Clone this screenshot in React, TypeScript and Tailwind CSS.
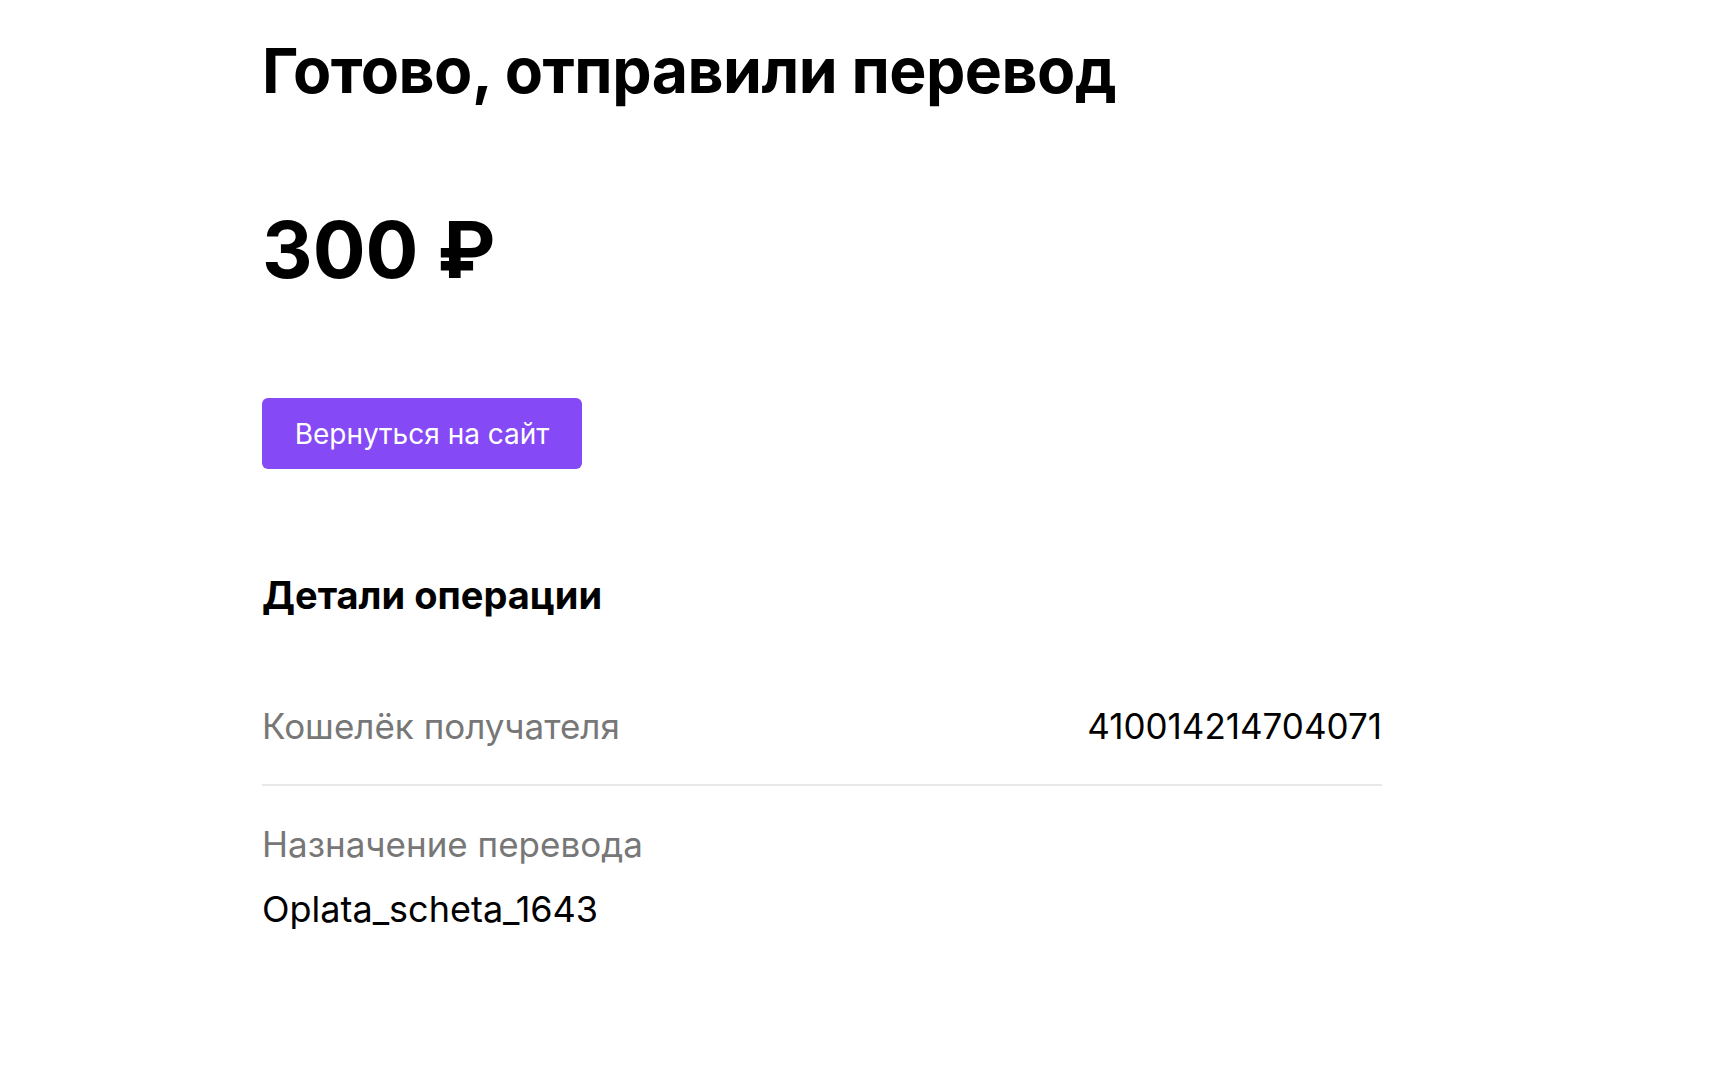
import React from 'react';

// --- Types ---
type DetailRow = {
    label: string;
    value: string;
    inline: boolean;
};

const details: DetailRow[] = [
    { label: 'Кошелёк получателя', value: '410014214704071', inline: true },
    { label: 'Назначение перевода', value: 'Oplata_scheta_1643', inline: false },
];

// --- Success page ---
export default function App() {
    return (
        <div className="min-h-screen bg-white font-['Inter','Noto_Sans',sans-serif] text-black">
            <div className="ml-[262px] w-[1120px] pt-[39px]">
                <h1 className="text-[62.5px] font-bold leading-none tracking-[-0.5px]">
                    Готово, отправили перевод
                </h1>

                <p className="mt-[109px] text-[78.5px] font-bold leading-none">300 ₽</p>

                <button className="mt-[109px] flex h-[71px] w-[320px] items-center justify-center rounded-md bg-[#8549f5] text-[28px] leading-none text-white">
                    Вернуться на сайт
                </button>

                <h2 className="mt-[107px] text-[38px] font-bold leading-none">Детали операции</h2>

                <div className="mt-[95px]">
                    {details.map((row) =>
                        row.inline ? (
                            <div
                                key={row.label}
                                className="flex items-baseline justify-between border-b-2 border-[#e8e8e8] pb-[40px] text-[35px] leading-none"
                            >
                                <span className="text-[#777777]">{row.label}</span>
                                <span>{row.value}</span>
                            </div>
                        ) : (
                            <div key={row.label} className="pt-[41px] text-[35px] leading-none">
                                <p className="text-[#777777]">{row.label}</p>
                                <p className="mt-[29px] text-[36px]">{row.value}</p>
                            </div>
                        )
                    )}
                </div>
            </div>
        </div>
    );
}
